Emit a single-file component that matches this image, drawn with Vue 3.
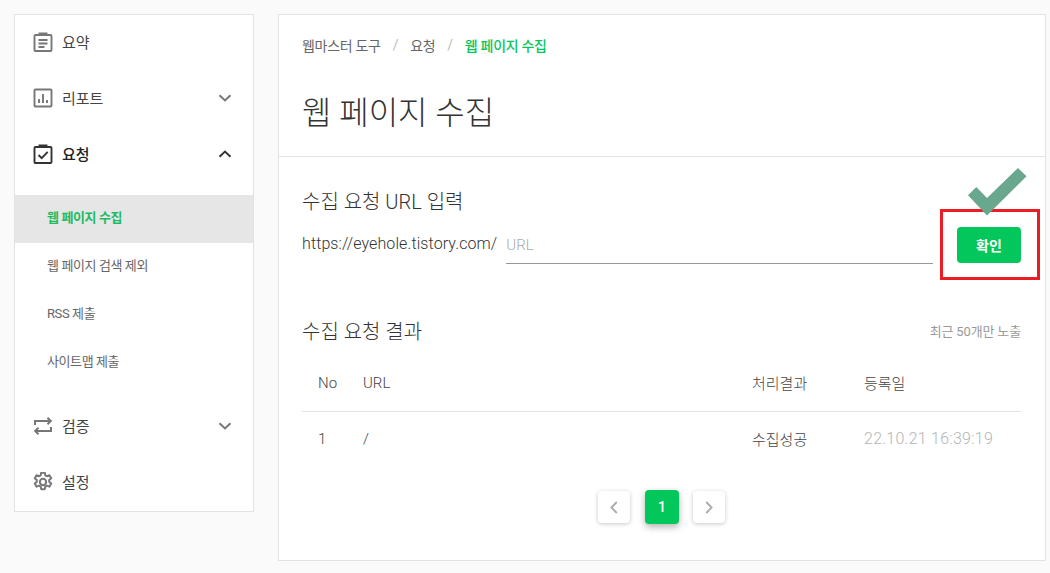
<template>
  <div class="page">
    <aside class="sidebar">
      <div class="menu-item">
        <svg class="menu-icon" viewBox="0 0 20 20" fill="none" stroke="#777" stroke-width="1.900">
          <rect x="1.500" y="3" width="17" height="16" rx="1" />
          <path d="M6.500 3V1.500h7V3M5.500 8h9M5.500 11.500h9M5.500 15h6" />
        </svg>
        <span>요약</span>
      </div>
      <div class="menu-item">
        <svg class="menu-icon" viewBox="0 0 20 20" fill="none" stroke="#777" stroke-width="1.900">
          <rect x="1.500" y="1.500" width="17" height="17" rx="1" />
          <path d="M6 15v-4M10 15V6M14 15v-3" />
        </svg>
        <span>리포트</span>
        <svg class="chevron" viewBox="0 0 14 8" fill="none" stroke="#777" stroke-width="2"><path d="M1.500 1.200 7 6.400l5.500-5.200" /></svg>
      </div>
      <div class="menu-item open">
        <svg class="menu-icon" viewBox="0 0 20 20" fill="none" stroke="#333" stroke-width="1.900">
          <rect x="1.500" y="3" width="17" height="16" rx="1" />
          <path d="M6.500 3V1.500h7V3M5.500 11l3.200 3.200 6-6.400" />
        </svg>
        <span>요청</span>
        <svg class="chevron" viewBox="0 0 14 8" fill="none" stroke="#333" stroke-width="2"><path d="M1.500 6.800 7 1.600l5.500 5.200" /></svg>
      </div>
      <ul class="submenu">
        <li v-for="(item, i) in subItems" :key="item" :class="{ active: i === 0 }">{{ item }}</li>
      </ul>
      <div class="menu-item">
        <svg class="menu-icon" viewBox="0 0 20 20" fill="none" stroke="#777" stroke-width="2">
          <path d="M2 9V5h15.500M14.500 1.800 17.800 5l-3.300 3.200M18 11v4H2.500M5.500 11.800 2.200 15l3.300 3.200" />
        </svg>
        <span>검증</span>
        <svg class="chevron" viewBox="0 0 14 8" fill="none" stroke="#777" stroke-width="2"><path d="M1.500 1.200 7 6.400l5.500-5.200" /></svg>
      </div>
      <div class="menu-item">
        <svg class="menu-icon" viewBox="0.500 0.500 19 19" fill="none" stroke="#777" stroke-width="1.900">
          <circle cx="10" cy="10" r="3" />
          <path d="M8.300 1.200h3.400l.5 2.500 1.500.8 2.400-.9 1.700 2.900-1.900 1.700v1.600l1.900 1.700-1.700 2.900-2.400-.9-1.500.8-.5 2.500H8.300l-.5-2.500-1.500-.8-2.400.9-1.700-2.900 1.900-1.700V8.200L2.200 6.500l1.700-2.900 2.400.9 1.500-.8z" stroke-linejoin="round" />
        </svg>
        <span>설정</span>
      </div>
    </aside>

    <main class="content">
      <header class="head">
        <nav class="crumbs">
          <span>웹마스터 도구</span>
          <i>/</i>
          <span>요청</span>
          <i>/</i>
          <b>웹 페이지 수집</b>
        </nav>
        <h1>웹 페이지 수집</h1>
      </header>

      <section class="body">
        <h2>수집 요청 URL 입력</h2>
        <div class="url-row">
          <span class="base-url">https://eyehole.tistory.com/</span>
          <div class="url-input">URL</div>
          <div class="submit-wrap">
            <button class="submit">확인</button>
            <div class="red-box"></div>
            <svg class="check-mark" viewBox="0 0 59 48"><path d="M0 27.300 8.300 19 19 30 50 0 58.500 8.300 19 47.500z" fill="#6aa78f" /></svg>
          </div>
        </div>

        <div class="result-head">
          <h2>수집 요청 결과</h2>
          <span class="note">최근 50개만 노출</span>
        </div>
        <div class="grid-row grid-title">
          <span>No</span><span>URL</span><span>처리결과</span><span>등록일</span>
        </div>
        <div class="grid-row">
          <span>1</span><span>/</span><span>수집성공</span><span class="date">22.10.21 16:39:19</span>
        </div>

        <div class="pager">
          <button class="page-btn">
            <svg viewBox="0 0 8 13" fill="none" stroke="#aaa" stroke-width="1.800"><path d="M6.800 1 1.400 6.500l5.400 5.500" /></svg>
          </button>
          <button class="page-btn current">1</button>
          <button class="page-btn next">
            <svg viewBox="0 0 8 13" fill="none" stroke="#aaa" stroke-width="1.800"><path d="M1.200 1l5.400 5.500L1.200 12" /></svg>
          </button>
        </div>
      </section>
    </main>
  </div>
</template>

<script setup>
const subItems = ['웹 페이지 수집', '웹 페이지 검색 제외', 'RSS 제출', '사이트맵 제출']
</script>

<style>
html, body {
  margin: 0;
  background: #fafafa;
}
</style>

<style scoped>
.page {
  display: flex;
  align-items: flex-start;
  gap: 24px;
  width: 1050px;
  height: 573px;
  padding: 14px 4px 0 14px;
  box-sizing: border-box;
  overflow: hidden;
  background: #fafafa;
  color: #333;
  font-family: Roboto, "Noto Sans CJK KR", sans-serif;
}

.sidebar {
  flex: 0 0 240px;
  box-sizing: border-box;
  background: #fff;
  border: 1px solid #e2e2e2;
}

.menu-item {
  display: flex;
  align-items: center;
  height: 56px;
  padding: 0 21px 2px 18px;
  box-sizing: border-box;
  font-size: 15px;
  color: #444;
}

.menu-item span {
  margin-bottom: 2px;
}

.menu-item.open {
  color: #222;
  font-weight: 500;
}

.menu-icon {
  width: 20px;
  height: 20px;
  margin-right: 9px;
}

.chevron {
  width: 14px;
  height: 8px;
  margin-left: auto;
}

.submenu {
  list-style: none;
  margin: 0;
  padding: 12px 0;
}

.submenu li {
  height: 48px;
  line-height: 46px;
  padding-left: 32px;
  font-size: 13px;
  letter-spacing: -0.4px;
  color: #666;
}

.submenu li.active {
  background: #e6e6e6;
  color: #1cbb63;
  font-weight: 700;
}

.content {
  flex: 1;
  height: 547px;
  box-sizing: border-box;
  background: #fff;
  border: 1px solid #e2e2e2;
}

.head {
  height: 141px;
  padding: 0 23px;
  border-bottom: 1px solid #e2e2e2;
}

.crumbs {
  display: flex;
  align-items: center;
  gap: 12px;
  padding-top: 19px;
  height: 22px;
  font-size: 14px;
  letter-spacing: -0.3px;
  color: #666;
}

.crumbs i {
  font-style: normal;
  color: #bbb;
}

.crumbs b {
  color: #03c75a;
  font-weight: 500;
}

h1 {
  margin: 34px 0 0;
  font-size: 32px;
  font-weight: 300;
  line-height: 46px;
  color: #333;
}

.body {
  padding: 31px 24px 0 23px;
}

h2 {
  margin: 0;
  font-size: 20px;
  font-weight: 300;
  line-height: 28px;
  color: #333;
}

.url-row {
  display: flex;
  align-items: flex-start;
  margin-top: 11px;
}

.base-url {
  margin-top: 3px;
  font-size: 16px;
  font-weight: 300;
  line-height: 28px;
  color: #333;
  letter-spacing: 0.1px;
}

.url-input {
  flex: 1;
  height: 36px;
  margin-left: 9px;
  line-height: 36px;
  font-size: 15px;
  font-weight: 300;
  color: #aaa;
  border-bottom: 1px solid #999;
}

.submit-wrap {
  position: relative;
  margin-left: 24px;
}

.submit {
  display: block;
  width: 64px;
  height: 36px;
  border: 0;
  border-radius: 4px;
  background: #03c75a;
  color: #fff;
  font: 700 14px Roboto, "Noto Sans CJK KR", sans-serif;
}

.red-box {
  position: absolute;
  left: -17px;
  top: -18px;
  width: 100px;
  height: 71px;
  box-sizing: border-box;
  border: 3px solid #ed1c24;
}

.check-mark {
  position: absolute;
  left: 11px;
  top: -59px;
  width: 59px;
  height: 48px;
}

.result-head {
  display: flex;
  align-items: center;
  justify-content: space-between;
  margin-top: 54px;
}

.note {
  margin-bottom: 4px;
  font-size: 13px;
  letter-spacing: -0.15px;
  color: #999;
}

.grid-row {
  display: grid;
  grid-template-columns: 45px 389px 112px 1fr;
  align-items: center;
  height: 53px;
  padding-left: 16px;
  font-size: 15px;
  font-weight: 300;
  color: #444;
}

.grid-title {
  height: 54px;
  margin-top: 12px;
  padding-bottom: 4px;
  box-sizing: border-box;
  border-bottom: 1px solid #e2e2e2;
}

.date {
  color: #b5b5b5;
  font-size: 16px;
  font-weight: 300;
  letter-spacing: 0.25px;
}

.pager {
  display: flex;
  justify-content: center;
  align-items: center;
  gap: 15px;
  margin-top: 25px;
}

.page-btn {
  display: flex;
  align-items: center;
  justify-content: center;
  width: 32px;
  height: 32px;
  padding: 0;
  border: 0;
  border-radius: 4px;
  background: #fff;
  box-shadow: 0 1px 4px rgba(0, 0, 0, 0.22);
}

.page-btn.next {
  margin-left: -1px;
}

.page-btn svg {
  width: 8px;
  height: 13px;
}

.page-btn.current {
  width: 34px;
  height: 34px;
  background: #03c75a;
  color: #fff;
  font: 500 14px Roboto, sans-serif;
  box-shadow: 0 3px 7px rgba(0, 0, 0, 0.3);
}
</style>
